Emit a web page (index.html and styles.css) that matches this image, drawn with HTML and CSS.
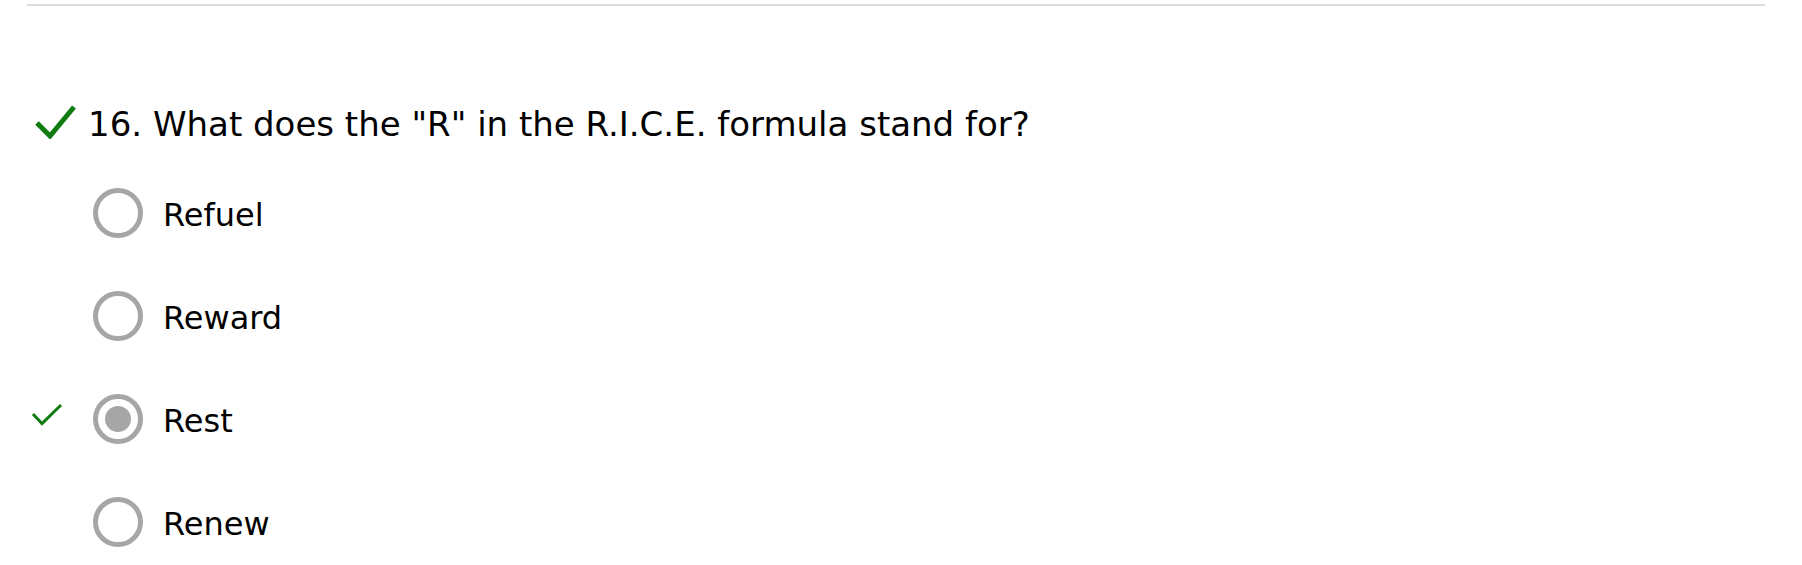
FILE: index.html
```html
<!DOCTYPE html>
<html lang="en">
<head>
<meta charset="utf-8">
<title>Quiz question 16</title>
<link rel="stylesheet" href="styles.css">
</head>
<body>
<div class="page">
  <div class="rule"></div>
  <div class="question">
    <svg class="q-check" width="44" height="34" viewBox="0 0 44 34" aria-hidden="true"><path d="M4 18 L17 31 L41 2" fill="none" stroke="#107c10" stroke-width="5"/></svg>
    <div class="q-text">16. What does the "R" in the R.I.C.E. formula stand for?</div>
  </div>
  <ul class="options">
    <li class="option">
      <span class="mark"></span>
      <span class="radio"></span>
      <span class="label">Refuel</span>
    </li>
    <li class="option">
      <span class="mark"></span>
      <span class="radio"></span>
      <span class="label">Reward</span>
    </li>
    <li class="option">
      <span class="mark"><svg width="32" height="24" viewBox="0 0 32 24" aria-hidden="true"><path d="M2 11 L11 20.5 L30 2" fill="none" stroke="#107c10" stroke-width="3"/></svg></span>
      <span class="radio checked"></span>
      <span class="label">Rest</span>
    </li>
    <li class="option">
      <span class="mark"></span>
      <span class="radio"></span>
      <span class="label">Renew</span>
    </li>
  </ul>
</div>
</body>
</html>
```

FILE: styles.css
```css
html, body {
  margin: 0;
  padding: 0;
  background: #ffffff;
}

body {
  font-family: "DejaVu Sans", Verdana, sans-serif;
  color: #000000;
}

.page {
  padding: 4px 37px 0 27px;
}

.rule {
  height: 2px;
  background: #dddddd;
}

.question {
  display: flex;
  align-items: flex-start;
  margin-top: 98px;
}

.q-check {
  margin-left: 6px;
  margin-right: 11px;
  margin-top: 1px;
  flex: none;
}

.q-text {
  font-size: 34px;
  line-height: 40px;
}

.options {
  list-style: none;
  margin: 44px 0 0 0;
  padding: 0;
  display: flex;
  flex-direction: column;
  gap: 53px;
}

.option {
  display: flex;
  align-items: center;
  height: 50px;
}

.mark {
  width: 66px;
  height: 50px;
  flex: none;
  display: flex;
  align-items: flex-start;
}

.mark svg {
  margin-left: 4px;
  margin-top: 9px;
}

.radio {
  width: 50px;
  height: 50px;
  box-sizing: border-box;
  border: 5px solid #a6a6a6;
  border-radius: 50%;
  flex: none;
  display: flex;
  align-items: center;
  justify-content: center;
}

.radio.checked::after {
  content: "";
  width: 26px;
  height: 26px;
  border-radius: 50%;
  background: #a6a6a6;
}

.label {
  margin-left: 20px;
  font-size: 32px;
  padding-top: 4px;
}
```
